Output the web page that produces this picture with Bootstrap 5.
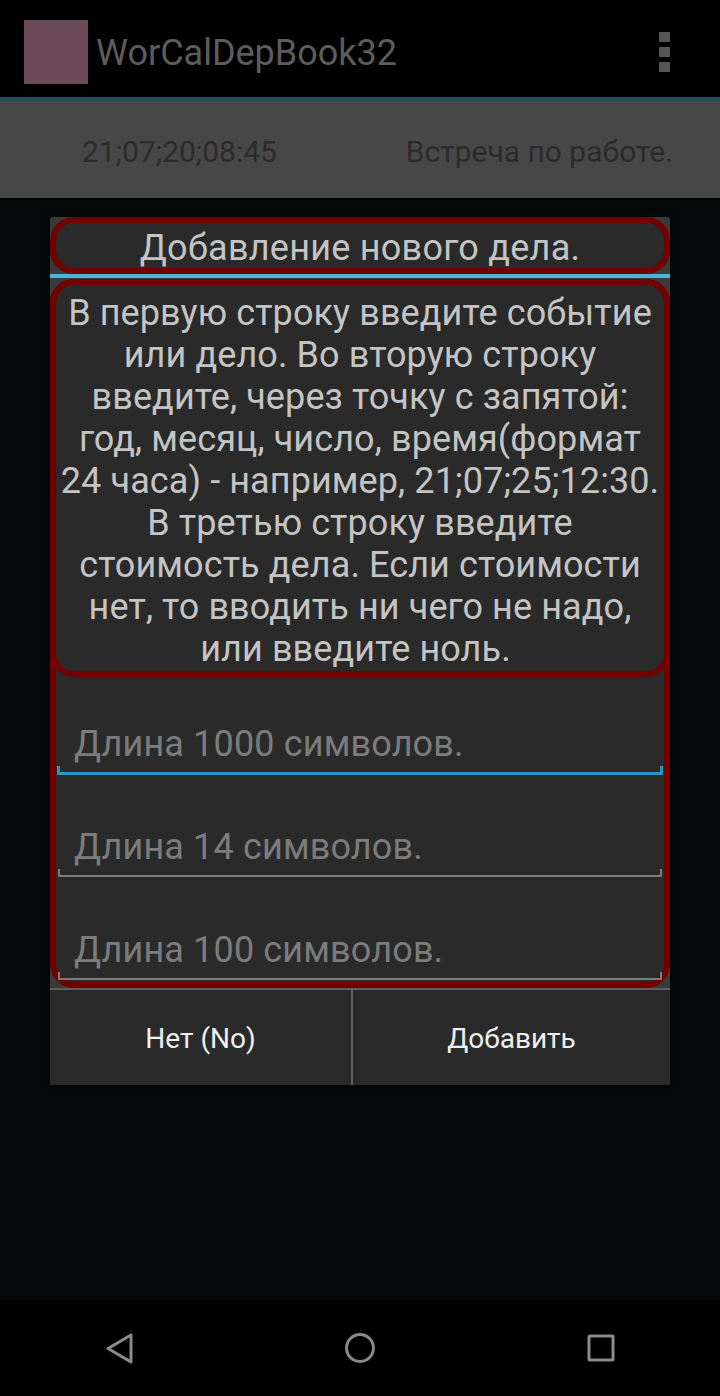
<!DOCTYPE html>
<html lang="ru">
<head>
  <meta charset="UTF-8" />
  <meta name="viewport" content="width=device-width, initial-scale=1.0"/>
  <title>WorCalDepBook32</title>
  <link rel="stylesheet" href="https://cdn.jsdelivr.net/npm/bootstrap@5.3.2/dist/css/bootstrap.min.css"/>
  <style>
    body {
      font-family: Roboto, "Liberation Sans", sans-serif;
      background-color: #050809;
      width: 720px;
      height: 1396px;
      overflow: hidden;
    }
    .screen { height: 1396px; }
    .app-bar {
      height: 97px;
      background-color: #000;
      padding: 20px 50px 13px 24px;
    }
    .app-logo { width: 64px; height: 64px; background-color: #6b4a57; }
    .app-title { font-size: 36px; color: #5c5c5c; margin-left: 8px; line-height: 66px; }
    .dots { gap: 5px; margin-top: 12px; }
    .dots span { width: 11px; height: 10px; background-color: #555; display: block; }
    .accent-dim { height: 4px; background-color: #26505f; }
    .event-row {
      height: 97px;
      background-color: #474747;
      color: #2b2b2b;
      font-size: 30px;
      padding: 3px 47px 0 82px;
    }
    .stage { flex: 1 1 auto; padding: 19px 50px 0; }
    .dlg { background-color: #3a3a3a; box-shadow: 0 0 6px #000; border-radius: 2px; }
    .red-box { border: 6px solid #720000; background-color: #2a2a2a; }
    .dlg-title {
      height: 57px;
      border-radius: 24px;
      color: #c4c4c4;
      font-size: 36px;
      letter-spacing: .26px;
      line-height: 50px;
      text-align: center;
    }
    .accent { height: 4px; background-color: #4bb3dc; margin-bottom: 1px; }
    .dlg-body { height: 709px; border-radius: 24px; }
    .dlg-msg {
      height: 398px;
      margin: -6px -6px 0;
      border-radius: 24px;
      color: #c4c4c4;
      font-size: 36px;
      letter-spacing: .1px;
      line-height: 42px;
      text-align: center;
      padding: 7px 3px 0;
    }
    .field {
      height: 102px;
      margin: 0 2px;
      border-bottom: 2px solid #7c7c7c;
      color: #7c7c7c;
      font-size: 36px;
      letter-spacing: .15px;
      line-height: 42px;
      padding: 51px 0 0 16px;
      position: relative;
    }
    .field::before, .field::after {
      content: "";
      position: absolute;
      bottom: 0;
      width: 2px;
      height: 6px;
      background-color: #7c7c7c;
    }
    .field::before { left: 0; }
    .field::after { right: 0; }
    .field-on { border-bottom: 3px solid #2196c4; height: 98px; margin: 0 1px; padding: 46px 0 0 17px; }
    .field-on::before, .field-on::after { width: 3px; background-color: #2196c4; }
    .field-end { height: 103px; padding-top: 52px; }
    .dlg-btns { height: 97px; background-color: #2a2a2a; border-top: 2px solid #5e5e5e; }
    .dlg-btn {
      color: #f0f0f0;
      font-size: 28px;
      line-height: 97px;
      text-align: center;
    }
    .btn-left { width: 303px; border-right: 2px solid #5e5e5e; }
    .sys-nav { height: 96px; background-color: #000; padding: 0 104px; }
  </style>
</head>
<body>
  <div class="screen d-flex flex-column">
    <div class="app-bar d-flex align-items-start">
      <div class="app-logo"></div>
      <div class="app-title">WorCalDepBook32</div>
      <div class="dots d-flex flex-column ms-auto">
        <span></span><span></span><span></span>
      </div>
    </div>
    <div class="accent-dim"></div>
    <div class="event-row d-flex justify-content-between align-items-center">
      <span>21;07;20;08:45</span>
      <span>Встреча по работе.</span>
    </div>

    <div class="stage">
      <div class="dlg">
        <div class="dlg-title red-box">Добавление нового дела.</div>
        <div class="accent"></div>
        <div class="dlg-body red-box">
          <div class="dlg-msg red-box">В первую строку введите событие или дело. Во вторую строку введите, через точку с запятой: год, месяц, число, время(формат 24 часа) - например, 21;07;25;12:30. В третью строку введите стоимость дела. Если стоимости нет, то вводить ни чего не надо, или введите ноль.&nbsp;</div>
          <div class="field field-on">Длина 1000 символов.</div>
          <div class="field">Длина 14 символов.</div>
          <div class="field field-end">Длина 100 символов.</div>
        </div>
        <div class="dlg-btns d-flex">
          <div class="dlg-btn btn-left">Нет (No)</div>
          <div class="dlg-btn flex-grow-1">Добавить</div>
        </div>
      </div>
    </div>

    <div class="sys-nav d-flex justify-content-between align-items-center">
      <svg width="32" height="32" viewBox="0 0 32 32" fill="none" stroke="#8a8a8a" stroke-width="3" stroke-linejoin="round"><path d="M27 3 L4 16.5 L27 30 Z"/></svg>
      <svg width="32" height="32" viewBox="0 0 32 32" fill="none" stroke="#8a8a8a" stroke-width="3"><circle cx="16" cy="16" r="13.5"/></svg>
      <svg width="32" height="32" viewBox="0 0 32 32" fill="none" stroke="#8a8a8a" stroke-width="3" stroke-linejoin="round"><rect x="5" y="4" width="24" height="24" rx="1"/></svg>
    </div>
  </div>
</body>
</html>
